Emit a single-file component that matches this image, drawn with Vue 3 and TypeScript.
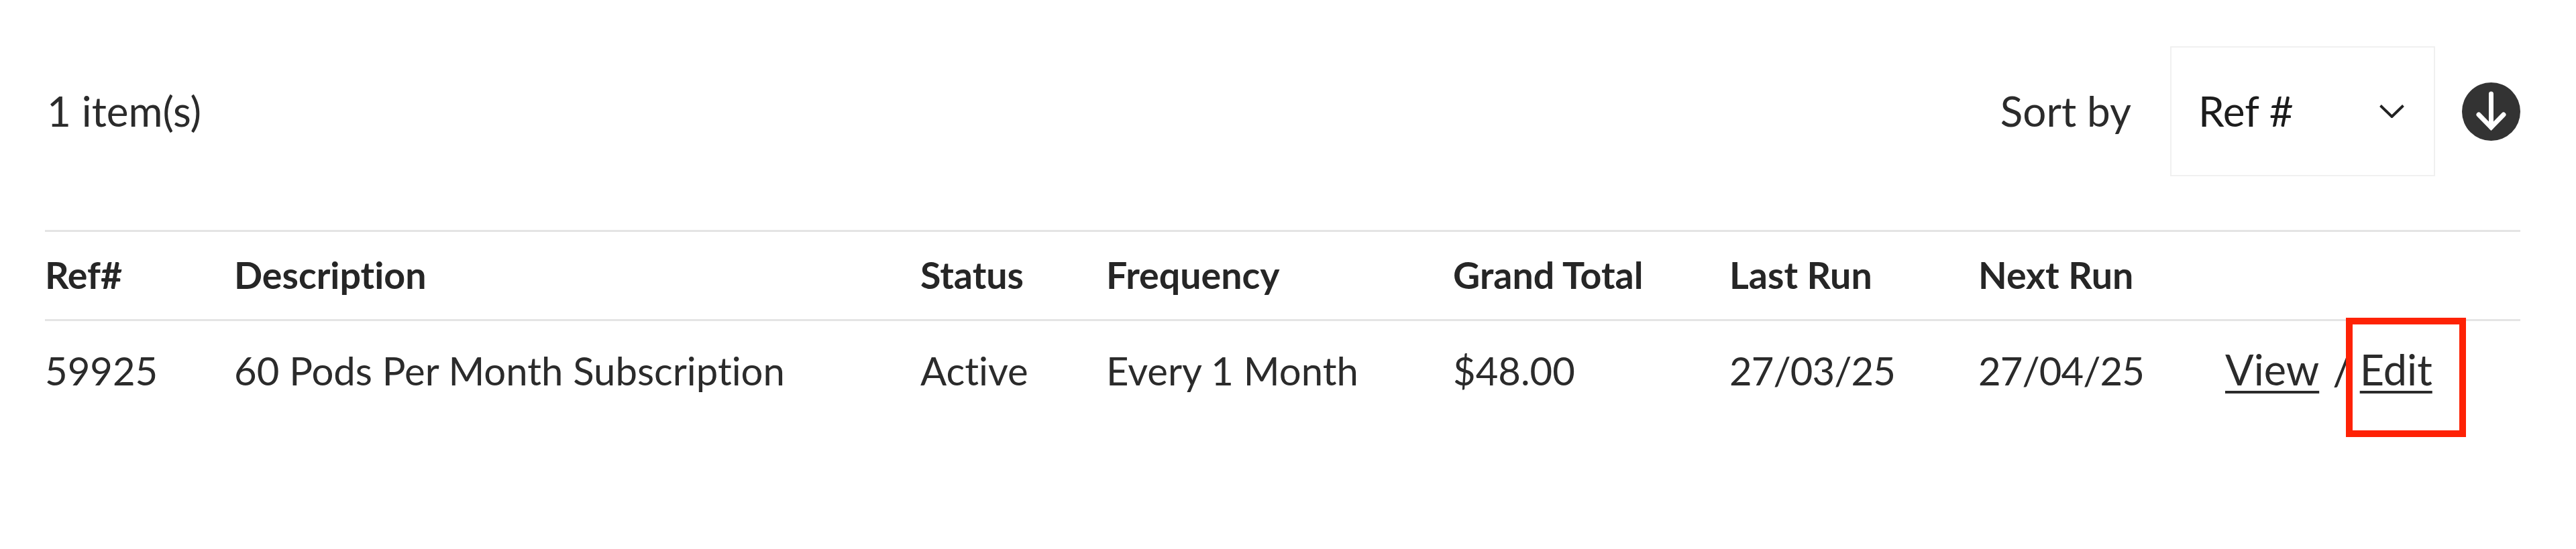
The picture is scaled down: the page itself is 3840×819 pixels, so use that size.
<script setup lang="ts">
interface Column { key: string; label: string }
const columns: Column[] = [
  { key: 'ref', label: 'Ref#' },
  { key: 'desc', label: 'Description' },
  { key: 'status', label: 'Status' },
  { key: 'freq', label: 'Frequency' },
  { key: 'total', label: 'Grand Total' },
  { key: 'last', label: 'Last Run' },
  { key: 'next', label: 'Next Run' },
  { key: 'actions', label: '' },
]
const row: Record<string, string> = {
  ref: '59925',
  desc: '60 Pods Per Month Subscription',
  status: 'Active',
  freq: 'Every 1 Month',
  total: '$48.00',
  last: '27/03/25',
  next: '27/04/25',
}
</script>

<template>
  <main class="page">
    <header class="toolbar">
      <span class="count">1 item(s)</span>
      <div class="sort">
        <span class="sort-label">Sort by</span>
        <div class="select">
          <span>Ref #</span>
          <svg class="chevron" viewBox="0 0 37 20" width="37" height="20" fill="none" stroke="#222" stroke-width="4">
            <path d="M1.5 1.5 18.5 18 35.5 1.5" />
          </svg>
        </div>
        <svg class="dir" viewBox="0 0 87 87" width="87" height="87">
          <circle cx="43.5" cy="43.5" r="43.5" fill="#333" />
          <path d="M43.5 17v50M25 48l18.5 19L62 48" fill="none" stroke="#fff" stroke-width="7" stroke-linecap="round" stroke-linejoin="miter" />
        </svg>
      </div>
    </header>
    <div class="table">
      <div class="row head">
        <div v-for="c in columns" :key="c.key" class="cell">{{ c.label }}</div>
      </div>
      <div class="row body">
        <div v-for="c in columns.slice(0, 7)" :key="c.key" class="cell" :class="c.key">{{ row[c.key] }}</div>
        <div class="cell actions">
          <a href="#">View</a><span class="sep">/</span><span class="edit"><a href="#">Edit</a><i class="mark"></i></span>
        </div>
      </div>
    </div>
  </main>
</template>

<style>
html, body { margin: 0; background: #fff; }
</style>

<style scoped>
.page {
  height: 819px;
  box-sizing: border-box;
  padding: 69px 83px 0 67px;
  font-family: Lato, "Liberation Sans", sans-serif;
  font-variant-ligatures: none;
  font-size: 58px;
  color: #2b2b2b;
  overflow: hidden;
}
.toolbar {
  display: flex;
  align-items: center;
  justify-content: space-between;
  height: 194px;
  margin-bottom: 80px;
  padding-left: 3px;
  font-size: 62px;
  line-height: 72px;
}
.count, .sort-label, .select span { position: relative; top: -1px; }
.sort {
  display: flex;
  align-items: center;
}
.sort-label { margin-right: 58px; }
.select {
  display: flex;
  align-items: center;
  justify-content: space-between;
  box-sizing: border-box;
  width: 395px;
  height: 194px;
  padding: 0 44px 0 40px;
  border: 2px solid #f0f0f0;
  color: #1c1c1c;
  margin-right: 40px;
}
.table { width: 100%; }
.row {
  display: grid;
  grid-template-columns: 282px 1023px 277px 517px 412px 371px 368px 440px;
}
.head {
  height: 136px;
  box-sizing: border-box;
  align-items: center;
  padding-bottom: 3px;
  border-top: 3px solid #e4e4e4;
  border-bottom: 3px solid #e4e4e4;
  font-weight: 700;
  font-size: 55.5px;
  color: #262626;
}
.body {
  padding-top: 34px;
  align-items: baseline;
}
.cell.last, .cell.next { letter-spacing: -0.9px; }
.actions {
  display: flex;
  align-items: baseline;
  font-size: 63px;
}
.actions a { color: inherit; text-decoration: underline; text-underline-offset: 8px; text-decoration-thickness: 4px; }
.sep { margin: 0 12px 0 20px; }
.edit { position: relative; }
.mark {
  position: absolute;
  left: -21px;
  top: -39px;
  width: 159px;
  height: 158px;
  border: 10px solid #fe2205;
}
</style>
